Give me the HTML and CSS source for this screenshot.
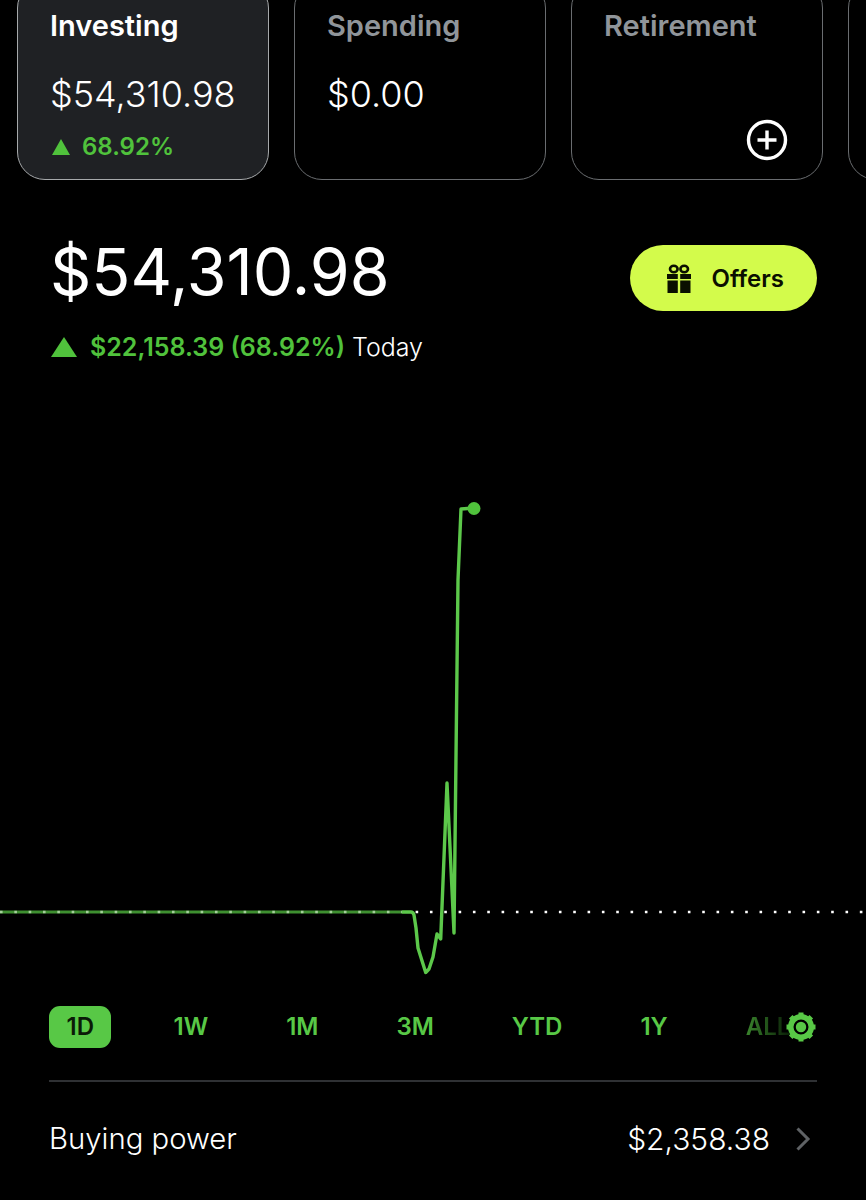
FILE: index.html
```html
<!DOCTYPE html>
<html lang="en">
<head>
  <meta charset="UTF-8" />
  <meta name="viewport" content="width=device-width, initial-scale=1.0"/>
  <title>Investing</title>
  <link rel="stylesheet" href="styles.css">
</head>
<body>

  <div class="accounts">
    <div class="account active">
      <div class="account-name">Investing</div>
      <div class="account-value">$54,310.98</div>
      <div class="account-change"><span class="tri-small"></span>68.92%</div>
    </div>
    <div class="account">
      <div class="account-name">Spending</div>
      <div class="account-value">$0.00</div>
    </div>
    <div class="account">
      <div class="account-name">Retirement</div>
      <svg class="add-icon" viewBox="0 0 42 42" width="42" height="42">
        <circle cx="21" cy="21" r="18.5" fill="none" stroke="#fff" stroke-width="3.4"/>
        <path d="M21 11.5v19M11.5 21h19" fill="none" stroke="#fff" stroke-width="3.4"/>
      </svg>
    </div>
    <div class="account"></div>
  </div>

  <div class="summary">
    <div>
      <div class="total">$54,310.98</div>
      <div class="change">
        <span class="tri-big"></span>
        <span class="change-amount">$22,158.39 (68.92%)</span>
        <span class="change-label">Today</span>
      </div>
    </div>
    <button class="offers">
      <svg viewBox="0 0 24 29" width="24" height="29">
        <ellipse cx="6.800" cy="5" rx="3.800" ry="3.200" fill="none" stroke="#0a0f00" stroke-width="2.600"/>
        <ellipse cx="17.200" cy="5" rx="3.800" ry="3.200" fill="none" stroke="#0a0f00" stroke-width="2.600"/>
        <path d="M0 10h10.800v5H0zM13.200 10H24v5H13.200zM0.500 16.500h10.300V29H0.500zM13.200 16.500h10.300V29H13.200z" fill="#0a0f00"/>
      </svg>
      <span>Offers</span>
    </button>
  </div>

  <svg class="chart" viewBox="0 0 866 500" width="866" height="500">
    <path class="flat" d="M0 412H402"/>
    <path class="dots-faint" d="M0 412H402"/>
    <path class="dots" d="M415.600 412H866"/>
    <path class="line" d="M402 412H411Q413 412 414 415L416 428L418 448L425.700 472.500L429 469L433 457L437 434L440.700 439L447 283L454 433L458 80L461 9L474 8"/>
    <circle cx="474" cy="8.500" r="6.500" fill="#50c23c"/>
  </svg>

  <div class="ranges">
    <span class="range selected">1D</span>
    <span class="range">1W</span>
    <span class="range">1M</span>
    <span class="range">3M</span>
    <span class="range">YTD</span>
    <span class="range">1Y</span>
    <span class="range range-all">ALL</span>
    <svg class="gear" viewBox="0 0 30 30" width="30" height="30">
      <circle cx="15" cy="15" r="10.250" fill="none" stroke="#58c846" stroke-width="5.500"/>
      <circle cx="15" cy="15" r="5.200" fill="#58c846"/>
      <path d="M15 .5v5M15 24.500v5M.5 15h5M24.500 15h5M4.700 4.700l3.500 3.500M21.800 21.800l3.500 3.500M4.700 25.300l3.500-3.500M21.800 8.200l3.500-3.500" stroke="#58c846" stroke-width="5"/>
    </svg>
  </div>

  <div class="row">
    <span>Buying power</span>
    <span class="row-right">
      <span class="row-value">$2,358.38</span>
      <svg viewBox="0 0 16 26" width="16" height="26">
        <path d="M2.500 2.500L13 13L2.500 23.500" fill="none" stroke="#5f6265" stroke-width="3"/>
      </svg>
    </span>
  </div>

</body>
</html>
```

FILE: styles.css
```css
html, body {
  height: 100%;
}

body {
  margin: 0;
  background-color: #000;
  color: #fff;
  font-family: Inter, "Liberation Sans", sans-serif;
  overflow: hidden;
}

.accounts {
  display: flex;
  gap: 25px;
  height: 200px;
  margin-top: -20px;
  padding-left: 17px;
  overflow: hidden;
}

.account {
  position: relative;
  box-sizing: border-box;
  flex: 0 0 252px;
  height: 200px;
  padding: 28px 32px 0;
  border: 1.500px solid #6a6d70;
  border-radius: 28px;
}

.account.active {
  background-color: #1f2124;
  border-color: #a6a9ab;
}

.account-name {
  font-size: 29px;
  font-weight: 600;
  line-height: 34px;
  color: #90959a;
}

.active .account-name {
  color: #fff;
}

.account-value {
  margin-top: 30px;
  font-size: 36px;
  font-weight: 300;
  line-height: 42px;
}

.account-change {
  display: flex;
  align-items: center;
  margin-top: 17px;
  font-size: 24px;
  font-weight: 600;
  line-height: 30px;
  color: #50c23c;
}

.tri-small {
  width: 0;
  height: 0;
  margin-left: 2px;
  margin-right: 12px;
  border-left: 9.500px solid transparent;
  border-right: 9.500px solid transparent;
  border-bottom: 16px solid #50c23c;
}

.add-icon {
  position: absolute;
  right: 34px;
  bottom: 18px;
}

.summary {
  display: flex;
  justify-content: space-between;
  align-items: flex-start;
  height: 320px;
  padding: 56px 49px 0 51px;
  box-sizing: border-box;
}

.total {
  margin-left: -1px;
  font-size: 64.400px;
  font-weight: 400;
  line-height: 72px;
}

.change {
  display: flex;
  align-items: center;
  margin-top: 24px;
  font-size: 25px;
  line-height: 30px;
}

.tri-big {
  width: 0;
  height: 0;
  margin-right: 13px;
  border-left: 13px solid transparent;
  border-right: 13px solid transparent;
  border-bottom: 20px solid #50c23c;
}

.change-amount {
  font-weight: 600;
  color: #50c23c;
}

.change-label {
  margin-left: 7px;
  font-weight: 300;
}

.offers {
  display: flex;
  align-items: center;
  gap: 21px;
  height: 66px;
  margin-top: 9px;
  padding: 0 33px 0 37px;
  border: none;
  border-radius: 33px;
  background-color: #d3fb4b;
  color: #0a0f00;
  font-family: inherit;
  font-size: 24px;
  font-weight: 600;
}

.chart {
  display: block;
}

.dots, .dots-faint {
  fill: none;
  stroke-width: 2.600;
  stroke-dasharray: 2.600 11.730;
}

.dots {
  stroke: #fff;
}

.dots-faint {
  stroke: #a5cf9c;
}

.flat {
  fill: none;
  stroke: #3e8f30;
  stroke-width: 3;
}

.line {
  fill: none;
  stroke: #5cc84a;
  stroke-width: 3.400;
  stroke-linejoin: round;
}

.ranges {
  position: relative;
  display: flex;
  gap: 46px;
  align-items: center;
  height: 44px;
  margin-top: 5px;
  padding: 0 49px;
}

.range {
  padding: 6px 16px;
  font-size: 24px;
  font-weight: 600;
  line-height: 30px;
  color: #58c846;
}

.range.selected {
  padding: 6px 17.500px;
  border-radius: 11px;
  background-color: #58c846;
  color: #0a1a07;
}

.range-all {
  background: linear-gradient(90deg, #3f8f31 15%, #0c2408 75%);
  -webkit-background-clip: text;
  background-clip: text;
  color: transparent;
}

.gear {
  position: absolute;
  right: 50px;
  top: 7px;
}

.row {
  display: flex;
  justify-content: space-between;
  align-items: center;
  margin: 31px 49px 0;
  padding-top: 37px;
  border-top: 2px solid #2f3134;
  font-size: 29.300px;
  font-weight: 300;
  line-height: 40px;
}

.row-value {
  font-size: 30px;
}

.row-right {
  display: flex;
  align-items: center;
  gap: 25px;
  padding-right: 6px;
}
```
